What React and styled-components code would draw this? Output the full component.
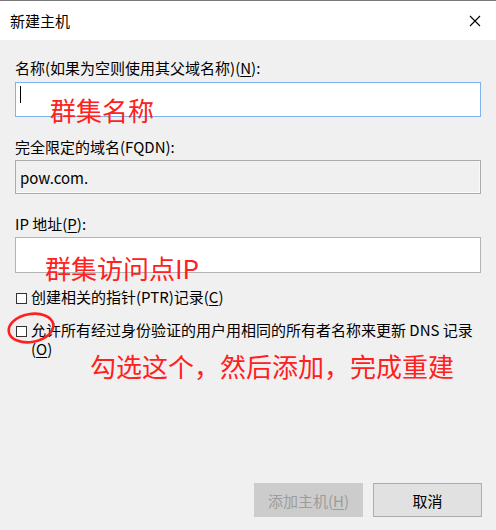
import React from 'react';
import styled, { createGlobalStyle } from 'styled-components';

const GlobalStyle = createGlobalStyle`
  html, body {
    margin: 0;
    padding: 0;
    background: #f0f0f0;
  }
  body {
    font-family: "Noto Sans CJK SC", "Noto Sans", "Liberation Sans", sans-serif;
    color: #000;
  }
`;

const Dialog = styled.div`
  width: 496px;
  height: 530px;
  box-sizing: border-box;
  border-top: 1px solid #7a7a7a;
  background: #f0f0f0;
  display: flex;
  flex-direction: column;
  overflow: hidden;
`;

const TitleBar = styled.div`
  height: 39px;
  background: #fff;
  display: flex;
  align-items: center;
  justify-content: space-between;
  padding: 0 15px 0 10px;
  font-size: 15px;
`;

const Body = styled.div`
  padding: 18px 15px 0 15px;
  display: flex;
  flex-direction: column;
`;

const Label = styled.div`
  font-size: 15px;
  line-height: 20px;
  height: 20px;
  margin-top: ${(p) => p.$top || 0}px;
`;

const Key = styled.span`
  text-decoration: underline;
  text-underline-offset: 2px;
`;

const Field = styled.div`
  position: relative;
  box-sizing: border-box;
  height: ${(p) => p.$h}px;
  margin-top: ${(p) => p.$top || 3}px;
  background: ${(p) => (p.$readonly ? '#f0f0f0' : '#fff')};
  border: 1px solid ${(p) => (p.$focus ? '#7eb4ea' : p.$readonly ? '#acacac' : '#b4b4b4')};
  box-shadow: ${(p) => (p.$readonly ? 'inset -1px -1px 0 #fafafa' : 'none')};
  display: flex;
  align-items: center;
  padding-left: 4px;
  font-size: 15px;
`;

const Caret = styled.span`
  width: 1px;
  height: 17px;
  background: #000;
  margin-top: -10px;
`;

const Note = styled.div`
  position: absolute;
  left: ${(p) => p.$left}px;
  top: ${(p) => p.$top}px;
  color: #ff2020;
  font-size: 26px;
  line-height: 26px;
  white-space: nowrap;
  pointer-events: none;
`;

const CheckRow = styled.div`
  display: flex;
  align-items: flex-start;
  gap: 4px;
  font-size: 15px;
  line-height: 19px;
  margin-top: ${(p) => p.$top}px;
  position: relative;
  padding-left: 1px;
`;

const Box = styled.span`
  flex: none;
  width: 9px;
  height: 9px;
  margin-top: 6px;
  border: 1px solid #333;
  background: #fff;
`;

const Ring = styled.svg`
  position: absolute;
  left: -10px;
  top: -10px;
  pointer-events: none;
`;

const Annotated = styled.div`
  position: relative;
  height: 30px;
`;

const Footer = styled.div`
  margin-top: auto;
  display: flex;
  justify-content: flex-end;
  gap: 10px;
  padding: 0 14px 13px 0;
`;

const Button = styled.div`
  box-sizing: border-box;
  width: 109px;
  height: 34px;
  display: flex;
  align-items: center;
  justify-content: center;
  font-size: 15px;
  background: ${(p) => (p.$disabled ? '#cccccc' : '#e1e1e1')};
  color: ${(p) => (p.$disabled ? '#9c9c9c' : '#000')};
  border: 1px solid ${(p) => (p.$disabled ? '#cccccc' : '#adadad')};
`;

export default function App() {
  return (
    <>
      <GlobalStyle />
      <Dialog>
        <TitleBar>
          <span>新建主机</span>
          <svg width="12" height="12" viewBox="0 0 12 12">
            <path d="M1 1 L11 11 M11 1 L1 11" stroke="#000" strokeWidth="1.1" fill="none" />
          </svg>
        </TitleBar>
        <Body>
          <Label>
            名称(如果为空则使用其父域名称)(<Key>N</Key>):
          </Label>
          <Field $h={35} $top={4} $focus>
            <Caret />
            <Note $left={34} $top={14}>群集名称</Note>
          </Field>

          <Label $top={20}>完全限定的域名(FQDN):</Label>
          <Field $h={34} $readonly>
            pow.com.
          </Field>

          <Label $top={20}>
            IP 地址(<Key>P</Key>):
          </Label>
          <Field $h={36}>
            <Note $left={29} $top={17}>群集访问点IP</Note>
          </Field>

          <CheckRow $top={14}>
            <Box />
            <span>
              创建相关的指针(PTR)记录(<Key>C</Key>)
            </span>
          </CheckRow>

          <CheckRow $top={14}>
            <Box />
            <span>
              允许所有经过身份验证的用户用相同的所有者名称来更新 DNS 记录
              <br />(<Key>O</Key>)
            </span>
            <Ring width="52" height="36" viewBox="0 0 52 36">
              <ellipse
                cx="26"
                cy="18"
                rx="22.5"
                ry="14"
                transform="rotate(-10 26 18)"
                stroke="#ff2020"
                strokeWidth="2.6"
                fill="none"
              />
            </Ring>
          </CheckRow>

          <Annotated>
            <Note $left={75} $top={-5}>勾选这个，然后添加，完成重建</Note>
          </Annotated>
        </Body>
        <Footer>
          <Button $disabled>
            添加主机(<Key>H</Key>)
          </Button>
          <Button>取消</Button>
        </Footer>
      </Dialog>
    </>
  );
}
